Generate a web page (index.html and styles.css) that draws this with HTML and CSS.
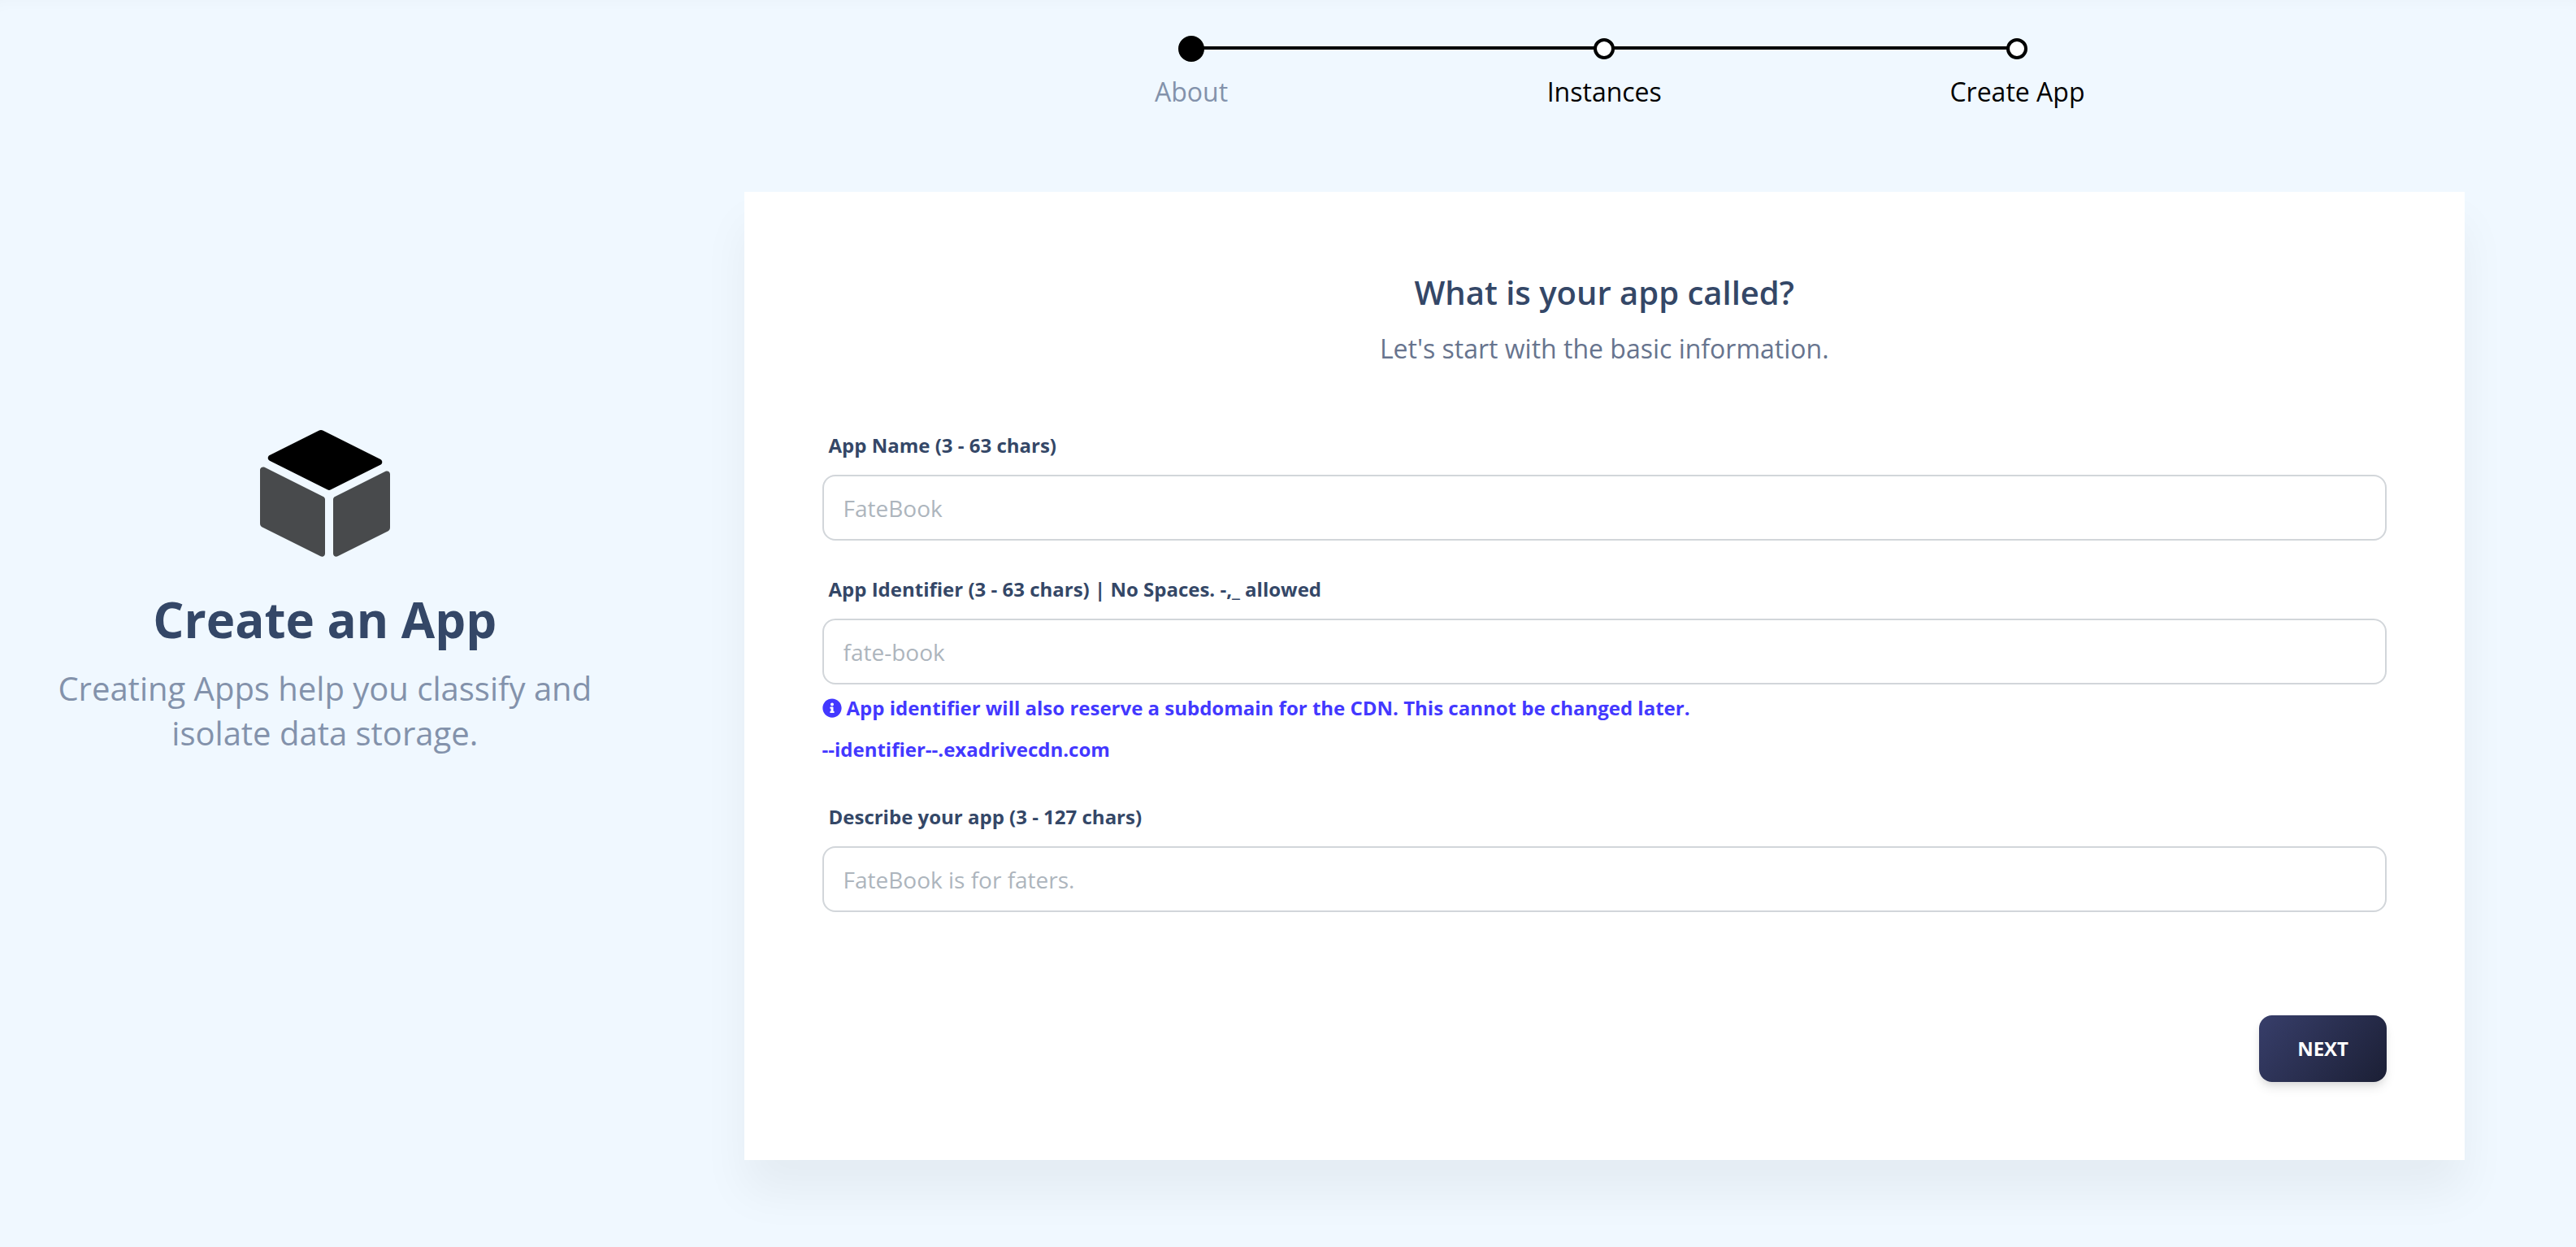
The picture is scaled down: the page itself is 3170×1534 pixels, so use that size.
FILE: index.html
```html
<!DOCTYPE html>
<html lang="en">
<head>
  <meta charset="utf-8">
  <meta name="viewport" content="width=device-width, initial-scale=1">
  <title>Create an App</title>
  <link rel="stylesheet" href="styles.css">
</head>
<body>
  <div class="page">
    <aside class="intro">
      <svg class="intro-icon" viewBox="0 0 42 42" aria-hidden="true">
        <path d="M22.76 19.309L38.899 11.24C39.393 10.993 39.593 10.392 39.346 9.898C39.249 9.704 39.092 9.547 38.899 9.451L20.274.138C19.905-.047 19.47-.047 19.1.138L3.101 8.138C2.607 8.385 2.407 8.986 2.654 9.48C2.751 9.673 2.908 9.83 3.101 9.927L21.865 19.309C22.147 19.45 22.478 19.45 22.76 19.309Z"/>
        <path class="side" d="M23.625 22.429V39.881C23.625 40.433 24.073 40.881 24.625 40.881C24.78 40.881 24.933 40.844 25.072 40.775L41.274 32.673C41.719 32.452 42 31.997 42 31.5V14.242C42 13.689 41.552 13.242 41 13.242C40.845 13.242 40.692 13.278 40.553 13.347L24.178 21.535C23.839 21.704 23.625 22.05 23.625 22.429Z"/>
        <path class="side" d="M20.447 21.535L1.447 12.035C.953 11.788.353 11.988.106 12.482C.036 12.621 0 12.774 0 12.929V30.188C0 30.685.281 31.139.726 31.362L19.553 40.775C20.047 41.022 20.647 40.822 20.894 40.328C20.964 40.189 21 40.036 21 39.881V22.429C21 22.05 20.786 21.704 20.447 21.535Z"/>
      </svg>
      <h1 class="intro-title">Create an App</h1>
      <p class="intro-text">Creating Apps help you classify and isolate data storage.</p>
    </aside>

    <main class="wizard">
      <nav class="steps" aria-label="Progress">
        <button class="step active" type="button" aria-current="step"><span class="dot"></span>About</button>
        <button class="step" type="button"><span class="dot"></span>Instances</button>
        <button class="step" type="button"><span class="dot"></span>Create App</button>
      </nav>

      <form class="card">
        <header class="card-header">
          <h2 class="card-title">What is your app called?</h2>
          <p class="card-text">Let's start with the basic information.</p>
        </header>

        <div class="fields">
          <div class="field">
            <label for="app-name">App Name (3 - 63 chars)</label>
            <input id="app-name" type="text" placeholder="FateBook">
          </div>
          <div class="field">
            <label for="app-identifier">App Identifier (3 - 63 chars) | No Spaces. -,_ allowed</label>
            <input id="app-identifier" type="text" placeholder="fate-book" aria-describedby="identifier-hint">
            <div class="hint" id="identifier-hint">
              <p class="hint-line">
                <svg class="hint-icon" viewBox="0 0 512 512" aria-hidden="true"><path d="M256 8C119.043 8 8 119.083 8 256c0 136.997 111.043 248 248 248s248-111.003 248-248C504 119.083 392.957 8 256 8zm0 110c23.196 0 42 18.804 42 42s-18.804 42-42 42-42-18.804-42-42 18.804-42 42-42zm56 254c0 6.627-5.373 12-12 12h-88c-6.627 0-12-5.373-12-12v-24c0-6.627 5.373-12 12-12h12v-64h-12c-6.627 0-12-5.373-12-12v-24c0-6.627 5.373-12 12-12h64c6.627 0 12 5.373 12 12v100h12c6.627 0 12 5.373 12 12v24z"/></svg>
                <span>App identifier will also reserve a subdomain for the CDN. This cannot be changed later.</span>
              </p>
              <p class="hint-line">--identifier--.exadrivecdn.com</p>
            </div>
          </div>
          <div class="field">
            <label for="app-description">Describe your app (3 - 127 chars)</label>
            <input id="app-description" type="text" placeholder="FateBook is for faters.">
          </div>
        </div>

        <div class="actions">
          <button class="next" type="button">NEXT</button>
        </div>
      </form>
    </main>
  </div>
</body>
</html>
```
FILE: styles.css
```css
* {
  box-sizing: border-box;
}

body {
  margin: 0;
  background: #f0f8ff;
  color: #344767;
  font-family: "Open Sans", sans-serif;
}

h1, h2, p {
  margin: 0;
}

.page {
  display: grid;
  grid-template-columns: 25% 1fr;
  min-height: 100vh;
  padding-left: 4px;
  box-shadow: inset 0 14px 20px -14px rgba(0, 0, 0, .03);
}

/* Introduction column */
.intro {
  padding: 529px 48px 0;
  text-align: center;
}

.intro-icon {
  display: block;
  width: 160px;
  height: 160px;
  margin: 0 auto 32px;
}

.intro-icon .side {
  opacity: .7;
}

.intro-title {
  font-size: 60px;
  font-weight: 700;
  line-height: 82px;
}

.intro-text {
  margin-top: 16px;
  color: #8392ab;
  font-size: 40px;
  line-height: 55px;
}

/* Step progress */
.wizard {
  padding: 44px 137px 107px 120px;
}

.steps {
  display: grid;
  grid-template-columns: repeat(3, 1fr);
  width: 72%;
  margin: 0 auto 99px;
}

.step {
  position: relative;
  display: flex;
  flex-direction: column;
  align-items: center;
  gap: 13px;
  padding: 0;
  border: 0;
  background: none;
  color: #000;
  font: 400 32px/48px "Open Sans", sans-serif;
}

.step.active {
  color: #8392ab;
}

.step + .step::before {
  content: "";
  position: absolute;
  top: 13px;
  right: 50%;
  width: 100%;
  height: 4px;
  background: #000;
}

.dot {
  position: relative;
  z-index: 1;
  width: 26px;
  height: 26px;
  margin: 3px 0;
  border: 4px solid #000;
  border-radius: 50%;
  background: #fff;
}

.active .dot {
  width: 32px;
  height: 32px;
  margin: 0;
  background: #000;
}

/* Form card */
.card {
  padding: 96px;
  background: #fff;
  box-shadow: 0 40px 54px rgba(0, 0, 0, .05);
}

.card-header {
  margin-bottom: 74px;
  text-align: center;
}

.card-title {
  font-size: 40px;
  font-weight: 600;
  line-height: 56px;
}

.card-text {
  margin-top: 16px;
  color: #67748e;
  font-size: 32px;
  line-height: 50px;
}

.fields {
  display: flex;
  flex-direction: column;
  gap: 40px;
}

.field label {
  display: block;
  margin: 0 8px 16px;
  font-size: 24px;
  font-weight: 700;
  line-height: 40px;
}

.field input {
  display: block;
  width: 100%;
  height: 81px;
  padding: 0 24px;
  border: 2px solid #d2d6da;
  border-radius: 16px;
  background: #fff;
  color: #495057;
  font: 400 28px/40px "Open Sans", sans-serif;
}

.field input::placeholder {
  color: #adb5bd;
  opacity: 1;
}

.hint {
  display: flex;
  flex-direction: column;
  gap: 11px;
  margin: 9px 0 3px;
  color: #4338ff;
  font-size: 24px;
  font-weight: 700;
  line-height: 40px;
}

.hint-line {
  display: flex;
  align-items: center;
  gap: 6px;
}

.hint-icon {
  flex: none;
  width: 24px;
  height: 24px;
  fill: currentColor;
}

.actions {
  display: flex;
  justify-content: flex-end;
  margin-top: 127px;
}

.next {
  padding: 21px 47px;
  border: 0;
  border-radius: 16px;
  background: linear-gradient(310deg, #141727, #3a416f) 25% 0 / 150%;
  box-shadow: 0 8px 14px -2px rgba(0, 0, 0, .11), 0 4px 8px -2px rgba(0, 0, 0, .07);
  color: #fff;
  font: 700 24px/40px "Open Sans", sans-serif;
}
```
